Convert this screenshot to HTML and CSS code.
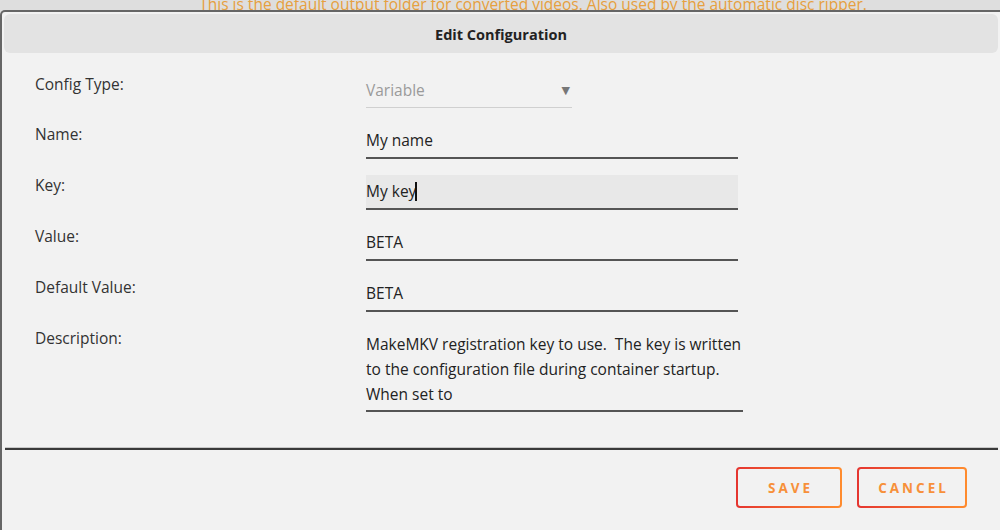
FILE: index.html
```
<!doctype html>
<html>
<head>
<meta charset="utf-8">
<title>Edit Configuration</title>
<link rel="stylesheet" href="styles.css">
</head>
<body>
<div class="note"><p>This is the default output folder for converted videos. Also used by the automatic disc ripper.</p></div>
<div class="dialog">
	<div class="dlg-head">Edit Configuration</div>
	<div class="form">
		<div class="lbl">Config Type:</div>
		<div class="field sel"><span>Variable</span><i>&#9660;</i></div>
		<div class="lbl">Name:</div>
		<div class="field">My name</div>
		<div class="lbl">Key:</div>
		<div class="field focus">My key<b class="caret"></b></div>
		<div class="lbl">Value:</div>
		<div class="field">BETA</div>
		<div class="lbl">Default Value:</div>
		<div class="field">BETA</div>
		<div class="lbl">Description:</div>
		<div class="field area">MakeMKV registration key to use.&nbsp; The key is written<br>to the configuration file during container startup.<br>When set to</div>
	</div>
	<div class="divider"></div>
	<div class="foot">
		<button class="btn save">SAVE</button>
		<button class="btn">CANCEL</button>
	</div>
</div>
</body>
</html>
```
FILE: styles.css
```
*{ margin:0; padding:0; box-sizing:border-box;}
html,body{ height:100%; overflow:hidden;}
body{ background:#dedede; font-family:"Open Sans","DejaVu Sans",sans-serif; color:#222;}

.note{ height:10px; overflow:hidden; text-align:center; padding-left:66px;}
.note p{ margin-top:-6px; font-size:15.5px; line-height:20px; color:#e6a040;}

.dialog{ margin-right:-2px; height:520px; border:2px solid #666; border-bottom:0; border-top-left-radius:5px; padding:2px; background:#f2f2f2;}
.dlg-head{ height:39px; padding-top:2px; line-height:37px; background:#e3e3e3; border-radius:6px; text-align:center; font-weight:bold; font-size:14.5px; color:#222;}

.form{ display:grid; grid-template-columns:331px 377px; row-gap:16px; padding:21px 0 35px 31px;}
.lbl{ font-size:15.5px; line-height:20px; color:#333;}
.field{ width:372px; height:35px; padding:6px 0 0 0; font-size:15.5px; line-height:20px; border-bottom:2px solid #555; color:#222;}
.field.sel{ width:206px; height:34px; border-bottom:1px solid #d0d0d0; color:#9a9a9a; display:flex; justify-content:space-between; padding-right:2px;}
.field.sel i{ font-style:normal; font-size:11px; color:#777; line-height:20px;}
.field.focus{ background:#e8e8e8;}
.caret{ display:inline-block; width:1.5px; height:19px; background:#111; vertical-align:-4px; margin-left:-1px;}
.field.area{ width:377px; height:auto; padding:4px 0 3px; line-height:25px;}

.divider{ margin-left:1px; height:3px; border-top:1px solid #c8c8c8; border-bottom:2px solid #3a3a3a;}

.foot{ display:flex; justify-content:flex-end; gap:15px; padding:17px 31px 0 0;}
.btn{ height:41px; width:106px; border:2px solid transparent; border-radius:4px; background:linear-gradient(#f2f2f2,#f2f2f2) padding-box, linear-gradient(90deg,#e53530,#ff8c2e) border-box; color:#f7903a; font-family:"Open Sans","DejaVu Sans",sans-serif; font-weight:bold; font-size:13.5px; letter-spacing:3px; padding-left:3px;}
.btn:last-child{ width:110px;}
```
